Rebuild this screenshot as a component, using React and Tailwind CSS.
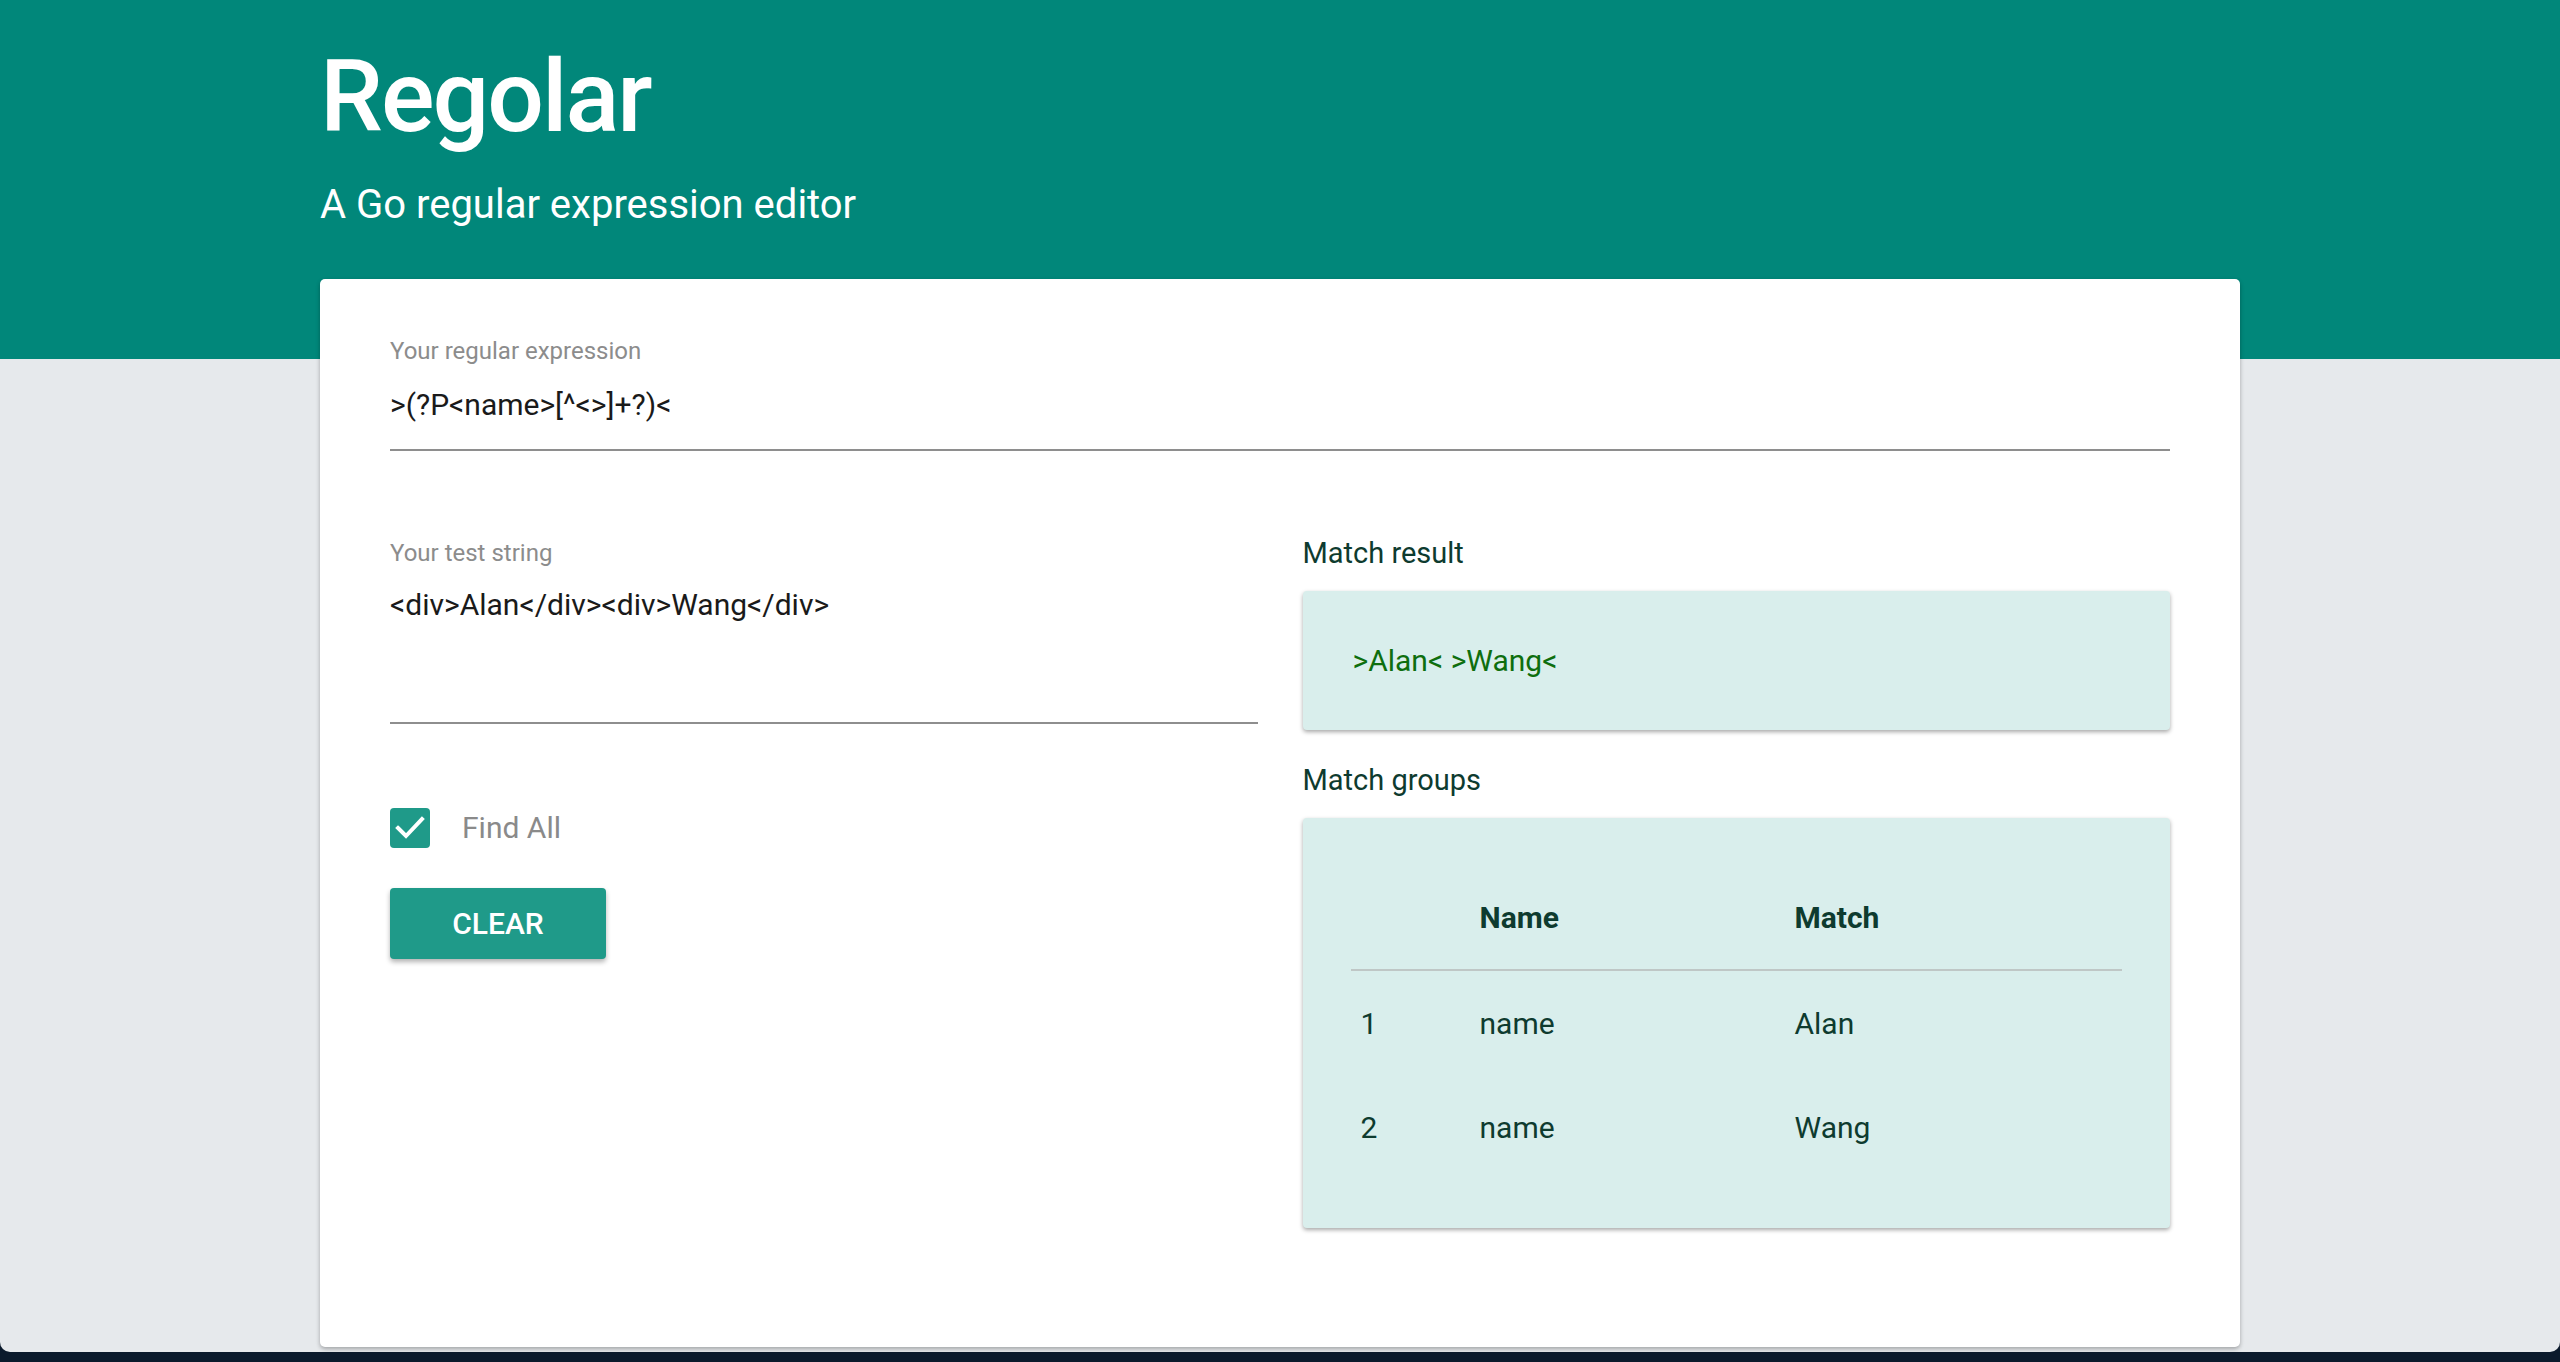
import React from "react";

function Check() {
  return (
    <svg viewBox="0 0 40 40" className="w-[40px] h-[40px]">
      <rect x="0" y="0" width="40" height="40" rx="4" fill="#1f9a89" />
      <polyline points="8,20 16,28 32,11" fill="none" stroke="#ffffff" strokeWidth="4" strokeLinecap="square" />
    </svg>
  );
}

export default function App() {
  return (
    <div className="h-[1362px] w-full bg-[#0b1a2c] flex flex-col font-['Roboto',sans-serif]">
      <div className="h-[1352px] w-full rounded-b-[10px] overflow-hidden bg-[linear-gradient(to_bottom,#01877a_359px,#e6e9ec_359px)]">
        <div className="w-[1920px] mx-auto">
          <div className="pt-[37px] h-[279px]">
            <h1 className="text-[100px] leading-[120px] text-white font-medium tracking-[-2px]">Regolar</h1>
            <p className="mt-[24px] text-[40px] leading-[48px] text-white">A Go regular expression editor</p>
          </div>
          <div className="h-[1068px] bg-white rounded-[5px] shadow-[0_2px_4px_rgba(0,0,0,0.3)] px-[70px] pt-[58px]">
            <div className="text-[24px] leading-[28px] text-[#8c8c8c]">Your regular expression</div>
            <div className="mt-[20px] text-[30px] leading-[40px] text-[#1a1a1a]">&gt;(?P&lt;name&gt;[^&lt;&gt;]+?)&lt;</div>
            <div className="mt-[24px] h-[2px] bg-[#8e8e8e]"></div>
            <div className="mt-[86px] grid grid-cols-2 gap-x-[45px]">
              <div className="flex flex-col">
                <div className="mt-[2px] text-[24px] leading-[28px] text-[#8c8c8c]">Your test string</div>
                <div className="mt-[18px] text-[30px] leading-[40px] text-[#1a1a1a]">&lt;div&gt;Alan&lt;/div&gt;&lt;div&gt;Wang&lt;/div&gt;</div>
                <div className="mt-[97px] h-[2px] bg-[#8e8e8e]"></div>
                <div className="mt-[84px] flex items-center gap-[32px]">
                  <Check />
                  <span className="text-[30px] leading-[40px] text-[#8a8a8a]">Find All</span>
                </div>
                <button className="mt-[40px] w-[216px] h-[71px] rounded-[4px] bg-[#1f9a89] text-white text-[30px] font-medium shadow-[0_3px_5px_rgba(0,0,0,0.3)]">CLEAR</button>
              </div>
              <div className="flex flex-col">
                <div className="-mt-[2px] text-[29px] leading-[36px] text-[#0e3b2f]">Match result</div>
                <div className="mt-[20px] h-[139px] rounded-[4px] bg-[#d9eeec] shadow-[0_2px_4px_rgba(0,0,0,0.35)] px-[50px] flex items-center">
                  <span className="text-[30px] leading-[40px] text-[#0e6e0e]">&gt;Alan&lt; &gt;Wang&lt;</span>
                </div>
                <div className="mt-[32px] text-[29px] leading-[36px] text-[#0e3b2f]">Match groups</div>
                <div className="mt-[20px] h-[410px] rounded-[4px] bg-[#d9eeec] shadow-[0_2px_4px_rgba(0,0,0,0.35)] px-[48px] py-[47px]">
                  <table className="w-full text-[30px] text-[#0e3b2f] border-collapse">
                    <thead>
                      <tr className="h-[105px] border-b-2 border-[#bfc7c6]">
                        <th className="w-[119px] text-left pl-[10px]"></th>
                        <th className="w-[315px] text-left pl-[10px] font-bold">Name</th>
                        <th className="text-left pl-[10px] font-bold">Match</th>
                      </tr>
                    </thead>
                    <tbody>
                      <tr className="h-[105px]">
                        <td className="pl-[10px]">1</td>
                        <td className="pl-[10px]">name</td>
                        <td className="pl-[10px]">Alan</td>
                      </tr>
                      <tr className="h-[104px]">
                        <td className="pl-[10px]">2</td>
                        <td className="pl-[10px]">name</td>
                        <td className="pl-[10px]">Wang</td>
                      </tr>
                    </tbody>
                  </table>
                </div>
              </div>
            </div>
          </div>
        </div>
      </div>
    </div>
  );
}
